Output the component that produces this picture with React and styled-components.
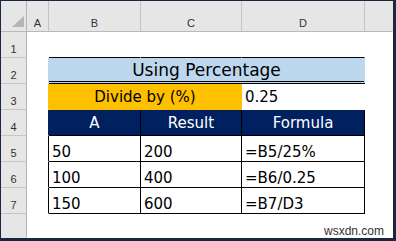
import React from "react";
import styled, { createGlobalStyle } from "styled-components";

// Базовые стили страницы
const Global = createGlobalStyle`
  html, body {
    margin: 0;
    padding: 0;
    background: #fff;
  }
  * {
    box-sizing: border-box;
  }
`;

const NAVY = "#002060";
const BLUE = "#BDD7EE";
const ORANGE = "#FFC000";
const BLACK = "#000";

const Frame = styled.div`
  position: relative;
  width: 396px;
  height: 241px;
  border-style: solid;
  border-color: #1b2640;
  border-width: 1px 3px 3px 1px;
  background: #fff;
  overflow: hidden;
`;

const Sheet = styled.div`
  display: grid;
  grid-template-columns: 26px 22px 92px 101px 123px 1fr;
  grid-template-rows: 31px repeat(7, 26px) 1fr;
  width: 100%;
  height: 100%;
`;

const Head = styled.div`
  display: flex;
  align-items: flex-end;
  justify-content: center;
  padding-bottom: 2px;
  background: #e6e6e6;
  border-right: 1px solid ${(p) => (p.$last ? "#e6e6e6" : "#c4c4c4")};
  border-bottom: 1px solid #b9b9b9;
  color: #333;
  font: 11px "Liberation Sans", Arial, sans-serif;
`;

const RowHead = styled(Head)`
  border-right-color: #b4b4b4;
  border-bottom-color: ${(p) => (p.$last ? "#e6e6e6" : "#c6c6c6")};
`;

const Corner = styled(Head)`
  justify-content: flex-end;
  padding: 0 2px 4px 0;
  border-right-color: #b4b4b4;
`;

const Triangle = styled.div`
  width: 12px;
  height: 11px;
  background: #b5b5b5;
  clip-path: polygon(100% 0, 100% 100%, 0 100%);
`;

const Cell = styled.div`
  grid-column: span ${(p) => p.$span || 1};
  display: flex;
  align-items: ${(p) => (p.$low ? "flex-end" : "center")};
  justify-content: ${(p) => (p.$center ? "center" : "flex-start")};
  padding-left: ${(p) => (p.$center ? 0 : 3)}px;
  background: ${(p) => p.$bg || "#fff"};
  color: ${(p) => p.$ink || BLACK};
  border-right: 1px solid ${(p) => p.$edge || "transparent"};
  border-bottom: ${(p) => p.$under || "1px solid transparent"};
  font: ${(p) => p.$size || 15}px "DejaVu Sans", sans-serif;
  white-space: nowrap;
  overflow: hidden;
`;

const Mark = styled.div`
  position: absolute;
  right: 9px;
  bottom: 0;
  color: #333;
  font: 12px "Liberation Sans", Arial, sans-serif;
`;

const columns = ["A", "B", "C", "D"];

const rows = [
  ["50", "200", "=B5/25%"],
  ["100", "400", "=B6/0.25"],
  ["150", "600", "=B7/D3"],
];

const line = `1px solid ${BLACK}`;

const App = () => {
  return (
    <>
      <Global />
      <Frame>
        <Sheet>
          {/* заголовки столбцов */}
          <Corner>
            <Triangle />
          </Corner>
          {columns.map((c) => (
            <Head key={c}>{c}</Head>
          ))}
          <Head $last />

          {/* строка 1 */}
          <RowHead>1</RowHead>
          <Cell />
          <Cell $under={line} />
          <Cell $under={line} />
          <Cell $under={line} />
          <Cell />

          {/* строка 2 — заголовок */}
          <RowHead>2</RowHead>
          <Cell $edge={BLUE} />
          <Cell $span={3} $center $bg={BLUE} $size={17} $under={`3px double ${BLACK}`}>
            Using Percentage
          </Cell>
          <Cell />

          {/* строка 3 */}
          <RowHead>3</RowHead>
          <Cell $edge={ORANGE} />
          <Cell $span={2} $center $bg={ORANGE}>
            Divide by (%)
          </Cell>
          <Cell>0.25</Cell>
          <Cell />

          {/* строка 4 — шапка таблицы */}
          <RowHead>4</RowHead>
          <Cell $edge={NAVY} />
          {["A", "Result", "Formula"].map((t) => (
            <Cell key={t} $center $bg={NAVY} $ink="#fff" $edge={BLACK} $under={line}>
              {t}
            </Cell>
          ))}
          <Cell />

          {/* данные */}
          {rows.map((r, i) => (
            <React.Fragment key={i}>
              <RowHead>{i + 5}</RowHead>
              <Cell $edge={BLACK} />
              {r.map((v, j) => (
                <Cell key={j} $low $edge={BLACK} $under={line}>
                  {v}
                </Cell>
              ))}
              <Cell />
            </React.Fragment>
          ))}

          <RowHead $last />
        </Sheet>
        <Mark>wsxdn.com</Mark>
      </Frame>
    </>
  );
};

export default App;
